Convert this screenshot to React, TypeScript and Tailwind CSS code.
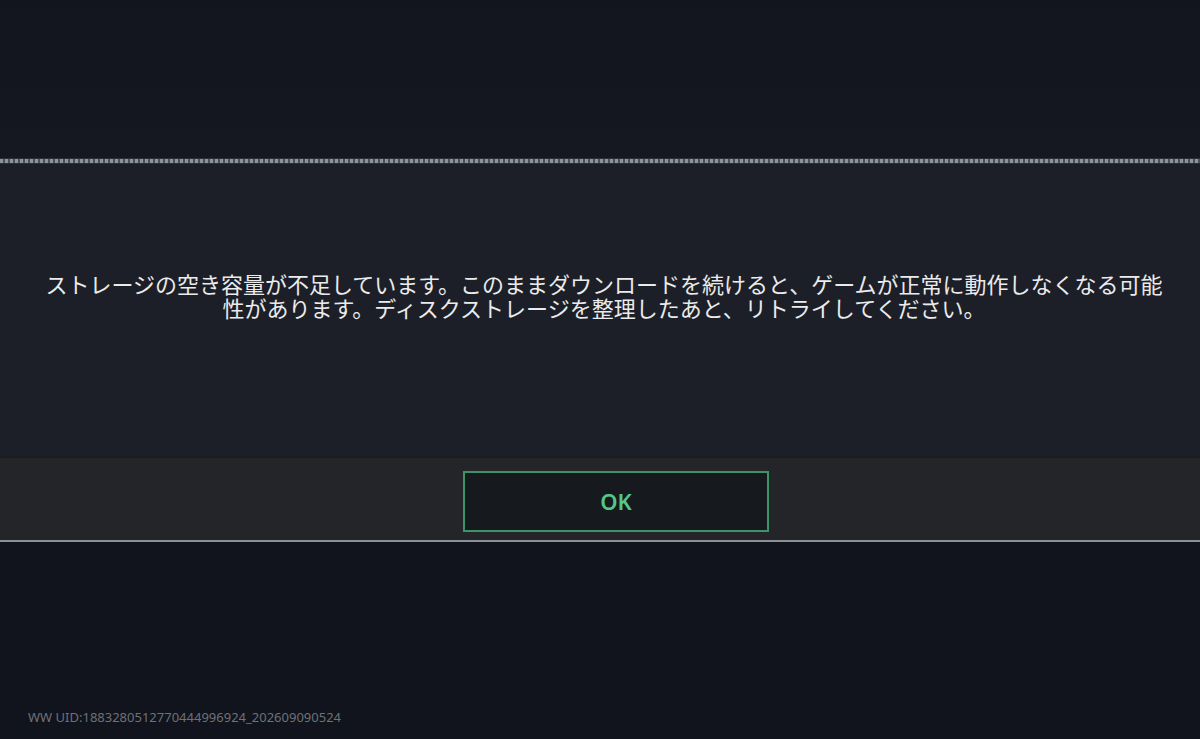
import React from "react";

export default function App() {
  return (
    <div
      className="w-[1200px] h-[739px] flex flex-col bg-[#12151d] overflow-hidden"
      style={{ fontFamily: '"Noto Sans CJK JP", "Noto Sans", sans-serif' }}
    >
      <div className="h-[158px] bg-gradient-to-b from-[#12151d] to-[#151821]" />
      <div className="h-[6px] flex flex-col">
        <div className="h-[1px] bg-[#2a2e37]" />
        <div
          className="h-[4px]"
          style={{
            backgroundImage:
              "repeating-linear-gradient(90deg, #8d939c 0px, #8d939c 3px, #4b5059 3px, #4b5059 5px)",
          }}
        />
        <div className="h-[1px] bg-[#2a2e37]" />
      </div>
      <div className="h-[292px] bg-[#1c1f27] flex items-center justify-center pb-[30px] pl-[8px]">
        <p className="w-[1128px] text-[22px] leading-[24px] text-[#ebebeb] text-center">
          ストレージの空き容量が不足しています。このままダウンロードを続けると、ゲームが正常に動作しなくなる可能性があります。ディスクストレージを整理したあと、リトライしてください。
        </p>
      </div>
      <div className="h-[2px] bg-[#1a1c22]" />
      <div className="h-[82px] bg-[#242529] flex items-center justify-center pl-[32px] pt-[5px]">
        <button className="w-[306px] h-[61px] border-2 border-[#3a9466] bg-[#16191e] flex items-center justify-center">
          <span
            className="text-[22px] font-semibold text-[#52c887]"
            style={{ fontFamily: '"Noto Sans", sans-serif' }}
          >
            OK
          </span>
        </button>
      </div>
      <div className="h-[2px] bg-[#8a8e95]" />
      <div className="flex-1 bg-[#11141c] flex flex-col justify-end">
        <div
          className="pl-[28px] pb-[12px] text-[13px] text-[#6e7178]"
          style={{ fontFamily: '"Noto Sans", sans-serif' }}
        >
          WW UID:1883280512770444996924_202609090524
        </div>
      </div>
    </div>
  );
}
